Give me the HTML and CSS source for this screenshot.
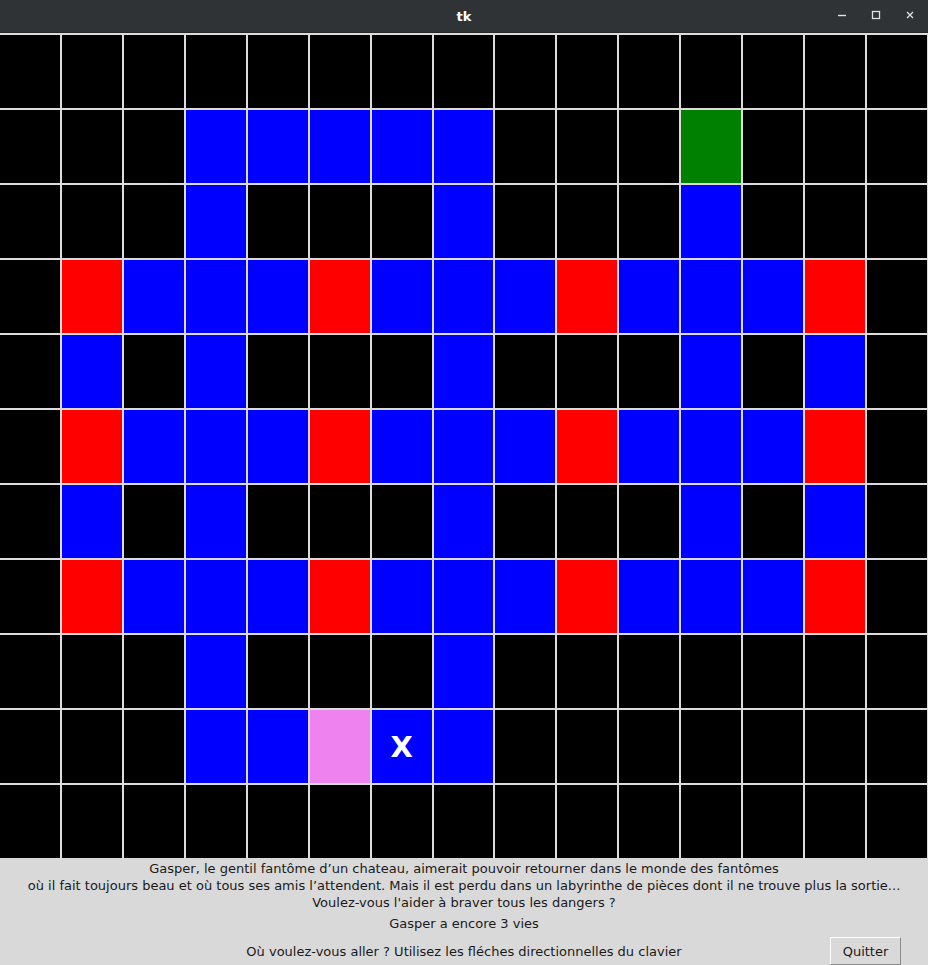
FILE: index.html
```html
<!doctype html>
<html lang="fr">

<head>
    <meta charset="UTF-8">
    <link rel="stylesheet" href="styles.css">
    <title>tk</title>
</head>

<body>
    <div class="window">
        <header class="titlebar">
            <span class="title">tk</span>
            <div class="controls">
                <svg width="10" height="10" viewBox="0 0 10 10"><path d="M1 5.5h8" stroke="#dfe1e2" stroke-width="1.4"/></svg>
                <svg width="10" height="10" viewBox="0 0 10 10"><rect x="1.5" y="1.5" width="7" height="7" fill="none" stroke="#dfe1e2" stroke-width="1.3"/></svg>
                <svg width="10" height="10" viewBox="0 0 10 10"><path d="M2 2l6 6M8 2l-6 6" stroke="#dfe1e2" stroke-width="1.3"/></svg>
            </div>
        </header>

        <main id="board" class="board"></main>

        <footer class="panel">
            <p class="story">Gasper, le gentil fantôme d’un chateau, aimerait pouvoir retourner dans le monde des fantômes<br>où il fait toujours beau et où tous ses amis l’attendent. Mais il est perdu dans un labyrinthe de pièces dont il ne trouve plus la sortie...<br>Voulez-vous l'aider à braver tous les dangers ?</p>
            <p class="lives">Gasper a encore 3 vies</p>
            <div class="bottom">
                <span class="hint">Où voulez-vous aller ? Utilisez les fléches directionnelles du clavier</span>
                <button class="quit">Quitter</button>
            </div>
        </footer>
    </div>
    <script>
        // . noir, B bleu, R rouge, G vert (sortie), V violet, X position de Gasper
        var carte = [
            "...............",
            "...BBBBB...G...",
            "...B...B...B...",
            ".RBBBRBBBRBBBR.",
            ".B.B...B...B.B.",
            ".RBBBRBBBRBBBR.",
            ".B.B...B...B.B.",
            ".RBBBRBBBRBBBR.",
            "...B...B.......",
            "...BBVXB.......",
            "..............."
        ];
        var couleurs = { ".": "noir", "B": "bleu", "R": "rouge", "G": "vert", "V": "violet", "X": "bleu" };
        var board = document.getElementById("board");
        carte.forEach(function(ligne) {
            for (let c of ligne) {
                let case_ = document.createElement("div");
                case_.className = "case " + couleurs[c];
                if (c === "X") case_.textContent = "X";
                board.appendChild(case_);
            }
        });
    </script>
</body>

</html>
```

FILE: styles.css
```css
* {
    margin: 0;
    padding: 0;
    box-sizing: border-box;
}

body {
    margin: 0;
    background: #d9d9d9;
    font-family: 'DejaVu Sans', 'Noto Sans', sans-serif;
}

.window {
    width: 928px;
    height: 965px;
    display: flex;
    flex-direction: column;
}

.titlebar {
    height: 33px;
    background: #2f3336;
    border-bottom: 1px solid #25292b;
    display: grid;
    grid-template-columns: 1fr auto 1fr;
    align-items: center;
}

.title {
    grid-column: 2;
    color: #ffffff;
    font-weight: bold;
    font-size: 13px;
}

.controls {
    grid-column: 3;
    justify-self: end;
    display: flex;
    gap: 24px;
    margin-right: 13px;
    margin-top: -2px;
}

.board {
    background: #dcdcdc;
    display: grid;
    grid-template-columns: repeat(15, 1fr);
    grid-template-rows: repeat(11, 73px);
    gap: 2px;
    padding-top: 2px;
    padding-right: 1px;
}

.case {
    display: flex;
    align-items: center;
    justify-content: center;
    color: #ffffff;
    font-weight: bold;
    font-size: 29px;
}

.noir { background: #000000; }
.bleu { background: #0000ff; }
.rouge { background: #ff0000; }
.vert { background: #008000; }
.violet { background: #ee82ee; }

.panel {
    flex: 1;
    background: #d9d9d9;
    color: #1a1a1a;
    font-size: 13px;
    text-align: center;
}

.story {
    line-height: 17px;
    padding-top: 2px;
}

.lives {
    line-height: 17px;
    margin-top: 4px;
}

.bottom {
    display: grid;
    grid-template-columns: 1fr auto 1fr;
    align-items: center;
    margin-top: 5px;
}

.hint {
    grid-column: 2;
}

.quit {
    grid-column: 3;
    justify-self: end;
    margin-right: 27px;
    width: 71px;
    height: 28px;
    font-family: inherit;
    font-size: 13px;
    color: #1a1a1a;
    background: #d9d9d9;
    border: 1px solid;
    border-color: #ffffff #8a8a8a #8a8a8a #ffffff;
}
```
